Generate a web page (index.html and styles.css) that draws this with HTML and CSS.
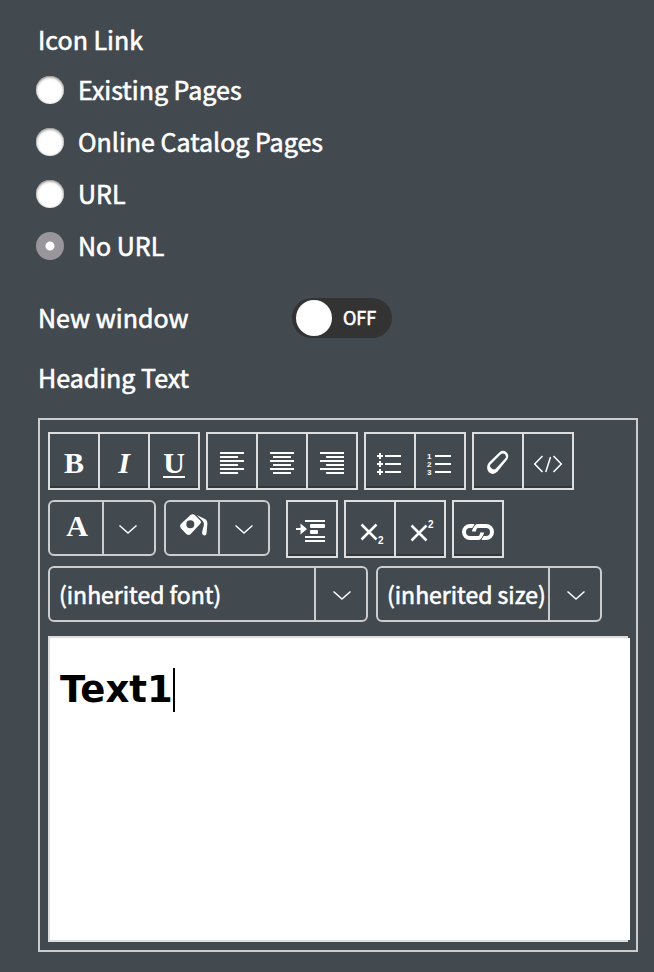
FILE: index.html
```html
<!DOCTYPE html>
<html lang="en">
<head>
<meta charset="utf-8">
<title>Icon settings</title>
<link rel="stylesheet" href="styles.css">
</head>
<body>
<form class="panel">
  <fieldset class="choices">
    <legend class="label">Icon Link</legend>
    <label class="choice"><input type="radio" name="link"><span>Existing Pages</span></label>
    <label class="choice"><input type="radio" name="link"><span>Online Catalog Pages</span></label>
    <label class="choice"><input type="radio" name="link"><span>URL</span></label>
    <label class="choice"><input type="radio" name="link" checked><span>No URL</span></label>
  </fieldset>

  <div class="setting">
    <label for="new-window">New window</label>
    <label class="switch"><input id="new-window" type="checkbox" role="switch"><span>OFF</span></label>
  </div>

  <div class="label" id="heading-label">Heading Text</div>

  <section class="editor" aria-labelledby="heading-label">
    <div class="toolbar">
      <div class="row">
        <div class="group">
          <button type="button" class="tool letter">B</button>
          <button type="button" class="tool letter italic">I</button>
          <button type="button" class="tool letter"><span class="underline">U</span></button>
        </div>
        <div class="group">
          <button type="button" class="tool" aria-label="Align left"><svg viewBox="0 0 48 54"><path class="line" d="M12 19h24M12 23h18M12 27h24M12 31h18M12 35h24M12 39h18"/></svg></button>
          <button type="button" class="tool" aria-label="Align center"><svg viewBox="0 0 48 54"><path class="line" d="M12 19h24M15 23h18M12 27h24M15 31h18M12 35h24M15 39h18"/></svg></button>
          <button type="button" class="tool" aria-label="Align right"><svg viewBox="0 0 48 54"><path class="line" d="M12 19h24M18 23h18M12 27h24M18 31h18M12 35h24M18 39h18"/></svg></button>
        </div>
        <div class="group">
          <button type="button" class="tool" aria-label="Bulleted list"><svg viewBox="0 0 48 54"><path class="line" d="M19 22h16M19 30h16M19 38h16M11 22h6M14 19v6M11 30h6M14 27v6M11 38h6M14 35v6"/><path class="solid" d="M12 22l2-2 2 2-2 2zM12 30l2-2 2 2-2 2zM12 38l2-2 2 2-2 2z"/></svg></button>
          <button type="button" class="tool" aria-label="Numbered list"><svg viewBox="0 0 48 54"><path class="line" d="M19 22h16M19 30h16M19 38h16"/><text class="digit" x="11" y="25">1</text><text class="digit" x="11" y="33">2</text><text class="digit" x="11" y="41">3</text></svg></button>
        </div>
        <div class="group">
          <button type="button" class="tool" aria-label="Clear formatting"><svg viewBox="0 0 48 54"><path class="solid" d="M15 28.500L25.500 18.200Q29 15.400 32.500 18.200Q35.700 21.800 33.200 25.500L23.500 37.500Q19.500 41.500 15.500 38.800Q12.800 36.500 13.200 32.500Q13.300 30.300 15 28.500z"/><path class="hole" d="M16.500 30.500L26.500 20.500Q29 18.500 31.200 20.500Q32.700 22.500 31.200 24.500L22 34.500Q20 36.300 17.800 34.500Q15 32.300 16.500 30.500z"/></svg></button>
          <button type="button" class="tool" aria-label="View source"><svg viewBox="0 0 48 54"><path class="thin" d="M18.500 22l-7.800 8 7.800 8M29.500 22l7.800 8-7.800 8M26.500 23l-4.700 15"/></svg></button>
        </div>
      </div>

      <div class="row">
        <div class="combo">
          <button type="button" class="swatch letter" aria-label="Text color">A</button>
          <button type="button" class="arrow" aria-label="Choose text color"><svg viewBox="0 0 50 52"><path class="thin" d="M15.500 23.500l8.500 7.500 8.500-7.500"/></svg></button>
        </div>
        <div class="combo">
          <button type="button" class="swatch" aria-label="Background color"><svg viewBox="0 0 52 52"><path class="solid" fill-rule="evenodd" d="M14.800 22L24.500 13Q27 11.300 29 13.300L34.500 18.700Q35.700 20.300 34.300 21.800L24.500 32.300Q22.500 34 20.300 32L14.800 26.200Q13.300 24 14.800 22zM24.300 18.200a4 4 0 1 0 0 8 4 4 0 1 0 0-8z"/><path class="solid" d="M30.500 13L39.500 17.300Q41.500 18.500 41.400 21.500L40.600 31Q40.300 33.500 38.500 33.500Q35.500 33 36.200 29.500L37.800 23.500Q38.200 20.500 36.500 18.800z"/></svg></button>
          <button type="button" class="arrow narrow" aria-label="Choose background color"><svg viewBox="0 0 48 52"><path class="thin" d="M15.500 23.500l8.500 7.500 8.500-7.500"/></svg></button>
        </div>
        <div class="group after-combo">
          <button type="button" class="tool" aria-label="Indent"><svg viewBox="0 0 48 54"><path class="line" d="M17 19h20M17 35h20M17 39h20M8 27h6"/><path class="solid" d="M12.500 21.500L19 27l-6.500 5.500z"/><rect class="solid" x="22" y="22" width="15" height="4" rx="1"/><rect class="solid" x="22" y="28" width="8" height="4" rx="1"/></svg></button>
        </div>
        <div class="group">
          <button type="button" class="tool" aria-label="Subscript"><svg viewBox="0 0 48 54"><path class="cross" d="M15.500 22.500l15 15M30.500 22.500l-15 15"/><text class="script" x="32" y="42">2</text></svg></button>
          <button type="button" class="tool" aria-label="Superscript"><svg viewBox="0 0 48 54"><path class="cross" d="M15.500 23.500l15 15M30.500 23.500l-15 15"/><text class="script" x="32" y="26">2</text></svg></button>
        </div>
        <div class="group">
          <button type="button" class="tool" aria-label="Insert link"><svg viewBox="0 0 48 54"><path class="chain" d="M20.500 24H16a6 6 0 0 0 0 12h8Q28 36 28 30.500M27.500 36H32a6 6 0 0 0 0-12h-8Q20 24 20 29.500"/><path class="gap" d="M22 21l-4.500 7M26 39l4.500-7"/></svg></button>
        </div>
      </div>

      <div class="row">
        <label class="combo dropdown font">
          <select aria-label="Font"><option>(inherited font)</option></select>
          <span class="arrow"><svg viewBox="0 0 50 52"><path class="thin" d="M17.500 23.500l8.500 7.500 8.500-7.500"/></svg></span>
        </label>
        <label class="combo dropdown size">
          <select aria-label="Font size"><option>(inherited size)</option></select>
          <span class="arrow"><svg viewBox="0 0 50 52"><path class="thin" d="M17.500 23.500l8.500 7.500 8.500-7.500"/></svg></span>
        </label>
      </div>
    </div>

    <div class="frame">
      <div class="content" role="textbox" aria-multiline="true" aria-labelledby="heading-label" contenteditable="true"><p>Text1</p></div>
    </div>
  </section>
</form>
</body>
</html>
```

FILE: styles.css
```css
* {
  box-sizing: border-box;
}

body {
  margin: 0;
  background: #42494f;
  color: #fff;
  font-family: "Noto Sans CJK JP", "Noto Sans", sans-serif;
  font-size: 25px;
  font-weight: 400;
  -webkit-text-stroke: 0.6px #fff;
}

button,
select {
  margin: 0;
  padding: 0;
  border: 0;
  background: none;
  color: inherit;
  font: inherit;
  -webkit-text-stroke: inherit;
}

.panel {
  padding: 16px 16px 20px 38px;
}

.label {
  padding: 0 0 2px;
  line-height: 46px;
}

.choices {
  margin: 0;
  padding: 0;
  border: 0;
  min-width: 0;
}

.choice {
  display: flex;
  align-items: center;
  gap: 14px;
  height: 52px;
  margin-left: -2px;
}

.choice span,
.setting > label:first-child,
.switch span {
  padding-bottom: 2px;
}

.choice input {
  appearance: none;
  width: 28px;
  height: 28px;
  margin: 0;
  border-radius: 50%;
  background: #fff;
  box-shadow: inset 0 1px 3px #77736f;
}

.choice input:checked {
  background: radial-gradient(circle, #fff 4px, #98959b 5px);
  box-shadow: none;
}

.setting {
  display: grid;
  grid-template-columns: 254px auto;
  align-items: center;
  height: 40px;
  margin: 26px 0 16px;
}

.switch {
  display: flex;
  align-items: center;
  gap: 11px;
  width: 100px;
  height: 40px;
  padding-left: 4px;
  border-radius: 20px;
  background: #333;
  font-size: 18px;
}

.switch input {
  appearance: none;
  width: 36px;
  height: 36px;
  margin: 0;
  border-radius: 50%;
  background: #fff;
}

.editor {
  margin-top: 16px;
  padding: 12px 8px 8px;
  border: 2px solid #ccc;
}

.toolbar {
  display: grid;
  gap: 8px;
  margin-bottom: 14px;
}

.row {
  display: flex;
  align-items: flex-start;
  gap: 6px;
}

.row:first-child {
  margin-bottom: 2px;
}

.group {
  display: flex;
  border: 2px solid #ddd;
}

.tool {
  width: 48px;
  height: 54px;
  box-shadow: inset 0 -2px #33363b;
}

.tool + .tool {
  width: 50px;
  border-left: 2px solid #ddd;
}

.tool svg,
.arrow svg,
.swatch svg {
  display: block;
  width: 100%;
}

.tool svg {
  height: 54px;
}

.letter {
  padding: 0 0 4px 2px;
  font-family: "Liberation Serif", serif;
  font-size: 30px;
  font-weight: 700;
  line-height: 34px;
  -webkit-text-stroke: 0;
}

.tool.letter {
  padding: 4px 0 0;
}

.tool.italic {
  font-style: italic;
}

.tool .underline {
  display: inline-block;
  border-bottom: 2px solid #fff;
  line-height: 26px;
}

.combo {
  display: flex;
  height: 56px;
  border: 2px solid #ccc;
  border-radius: 6px;
}

.combo + .combo {
  margin-left: 2px;
}

.after-combo {
  margin-left: 10px;
}

.swatch {
  width: 52px;
}

.arrow {
  width: 52px;
  border-left: 2px solid #ccc;
}

.narrow {
  width: 50px;
}

.dropdown select {
  appearance: none;
  flex: 1;
  min-width: 0;
  padding: 0 0 0 9px;
  font-size: 23px;
}

.font {
  width: 320px;
}

.size {
  width: 226px;
}

.line,
.thin,
.cross,
.chain,
.gap {
  fill: none;
  stroke: #fff;
  stroke-width: 2;
}

.thin {
  stroke-width: 1.5;
}

.cross {
  stroke-width: 2.5;
}

.chain {
  stroke-width: 4;
}

.gap {
  stroke: #42494f;
  stroke-width: 1;
}

.solid {
  fill: #fff;
}

.hole {
  fill: #42494f;
}

.digit,
.script {
  fill: #fff;
  stroke: none;
  font-family: "Liberation Sans", sans-serif;
  font-size: 8px;
  font-weight: 700;
  -webkit-text-stroke: 0;
}

.script {
  font-size: 10px;
}

.frame {
  border: 2px solid #ddd;
  border-right: 0;
}

.content {
  min-height: 302px;
  margin-right: -2px;
  padding: 30px 10px;
  background: #fff;
  color: #000;
  font-family: "DejaVu Sans", sans-serif;
  font-size: 37px;
  font-weight: 700;
  line-height: 44px;
  outline: none;
  -webkit-text-stroke: 0;
}

.content p {
  display: inline-block;
  margin: 0;
  border-right: 2px solid #000;
}
```
